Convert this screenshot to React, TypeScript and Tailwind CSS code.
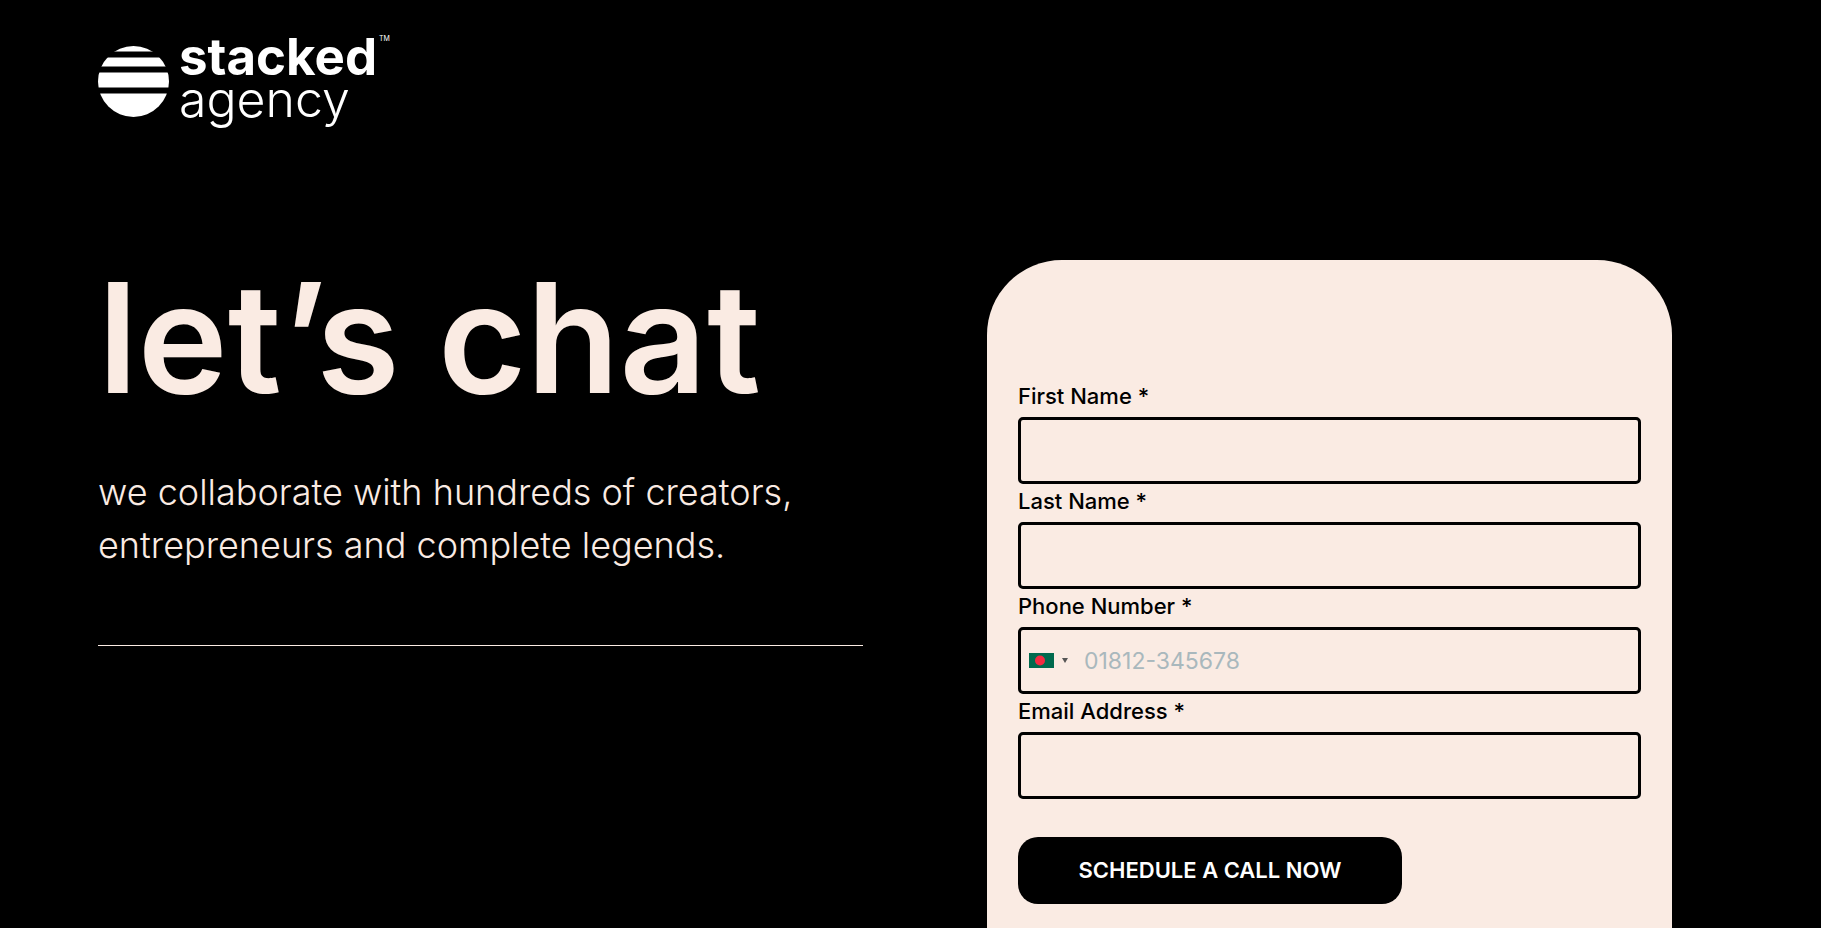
import React from "react";

type FieldProps = {
  id: string;
  label: string;
  type?: string;
};

const Logo = () => (
  <svg
    viewBox="0 0 300 104"
    className="h-[104px] w-[300px] overflow-visible fill-white font-['Inter',sans-serif]"
    role="img"
    aria-label="stacked agency"
  >
    <clipPath id="globe">
      <circle cx="35.5" cy="51.5" r="35.5" />
    </clipPath>
    <g clipPath="url(#globe)">
      <rect x="0" y="16" width="71" height="5.5" />
      <rect x="0" y="27.5" width="71" height="9" />
      <rect x="0" y="42.5" width="71" height="15" />
      <rect x="0" y="63.5" width="71" height="24" />
    </g>
    <text x="81" y="45" className="text-[51px] font-bold">
      stacked
    </text>
    <text x="81" y="87" className="text-[50px] font-light">
      agency
    </text>
    <text x="281" y="11" className="text-[7px]">
      TM
    </text>
  </svg>
);

const Field = ({ id, label, type = "text" }: FieldProps) => (
  <div className="flex flex-col">
    <label htmlFor={id} className="mb-1 text-[22px] leading-[34px] font-medium">
      {label} *
    </label>
    <input
      id={id}
      type={type}
      required
      className="h-[67px] w-full rounded-[5px] border-3 border-black px-4 text-[23px] outline-none"
    />
  </div>
);

const PhoneField = () => (
  <div className="flex flex-col">
    <label htmlFor="phone" className="mb-1 text-[22px] leading-[34px] font-medium">
      Phone Number *
    </label>
    <div className="flex h-[67px] items-center rounded-[5px] border-3 border-black">
      <button
        type="button"
        aria-label="Select country: Bangladesh"
        className="flex h-full cursor-pointer items-center gap-2 pr-4 pl-2"
      >
        <svg viewBox="0 0 25 15" className="h-[15px] w-[25px]">
          <rect width="25" height="15" fill="#006a4e" />
          <circle cx="11" cy="7.5" r="5" fill="#f42a41" />
        </svg>
        <svg viewBox="0 0 6 5" className="h-[5px] w-[6px]">
          <path d="M0 0h6L3 5z" fill="#555" />
        </svg>
      </button>
      <input
        id="phone"
        type="tel"
        required
        placeholder="01812-345678"
        className="h-full min-w-0 flex-1 text-[23px] outline-none placeholder:text-[#a9b8bd]"
      />
    </div>
  </div>
);

const App = () => {
  return (
    <div className="flex min-h-screen flex-col bg-black font-['Inter',sans-serif]">
      <header className="pt-[30px] pl-[98px]">
        <a href="/" className="inline-block align-top">
          <Logo />
        </a>
      </header>
      <main className="mt-[126px] grid flex-1 grid-cols-[765fr_685fr] gap-[124px] pr-[149px] pl-[98px] text-[#faebe3]">
        <section>
          <h1 className="text-[152px] leading-[156px] font-semibold">let’s chat</h1>
          <p className="mt-[50px] text-[36px] leading-[53px] font-light">
            we collaborate with hundreds of creators,
            <br />
            entrepreneurs and complete legends.
          </p>
          <hr className="mt-[73px] border-[#faebe3]" />
        </section>
        <form className="flex flex-col rounded-t-[75px] bg-[#faebe3] px-[31px] pt-[119px] text-black">
          <Field id="first-name" label="First Name" />
          <Field id="last-name" label="Last Name" />
          <PhoneField />
          <Field id="email" label="Email Address" type="email" />
          <button
            type="submit"
            className="mt-[38px] h-[67px] w-[384px] cursor-pointer rounded-[20px] bg-black text-[22px] font-semibold text-white"
          >
            SCHEDULE A CALL NOW
          </button>
        </form>
      </main>
    </div>
  );
};

export default App;
